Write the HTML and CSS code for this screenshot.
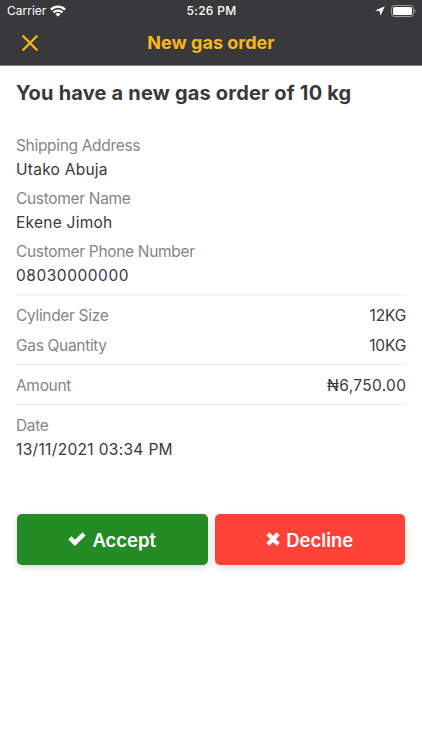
FILE: index.html
```html
<!DOCTYPE html>
<html lang="en">
<head>
<meta charset="utf-8">
<meta name="viewport" content="width=device-width">
<title>New gas order</title>
<link rel="stylesheet" href="styles.css">
</head>
<body>
<header class="top">
  <div class="status">
    <div class="carrier"><span>Carrier</span>
      <svg width="16" height="12" viewBox="0 0 16 12" fill="none" stroke="#fff" stroke-width="2.3"><path d="M.9 4.600C5 .6 11 .6 15.100 4.600"/><path d="M3.500 7.400c2.500-2.400 6.500-2.400 9 0"/><path d="M8 11.800 5.300 9.100c1.600-1.400 3.800-1.400 5.400 0z" fill="#fff" stroke="none"/></svg>
    </div>
    <div class="clock">5:26 PM</div>
    <div class="indicators">
      <svg width="10" height="10" viewBox="0 0 10 10" fill="#fff"><path d="M9.800.2 5.500 9.800 4.800 5.300.2 4.600z"/></svg>
      <svg width="25" height="12" viewBox="0 0 25 12"><rect x=".5" y=".5" width="22" height="11" rx="3" fill="none" stroke="#9a9a9b"/><rect x="2" y="2" width="19" height="8" rx="1.500" fill="#fff"/><path d="M23.500 4v4c1.500-.6 1.500-3.400 0-4z" fill="#9a9a9b"/></svg>
    </div>
  </div>
  <div class="navbar">
    <svg class="close" width="16" height="16" viewBox="0 0 16 16" fill="none" stroke="#fbb81b" stroke-width="2.300" stroke-linecap="round"><path d="M1.300 1.300l13.400 13.400M14.700 1.300 1.300 14.700"/></svg>
    <h1 class="title">New gas order</h1>
  </div>
</header>
<main class="content">
  <h2 class="heading">You have a new gas order of 10 kg</h2>
  <dl class="group">
    <div class="field"><dt>Shipping Address</dt><dd>Utako Abuja</dd></div>
    <div class="field"><dt>Customer Name</dt><dd>Ekene Jimoh</dd></div>
    <div class="field"><dt>Customer Phone Number</dt><dd class="phone">08030000000</dd></div>
  </dl>
  <dl class="group ruled">
    <div class="row"><dt>Cylinder Size</dt><dd class="weight">12KG</dd></div>
    <div class="row"><dt>Gas Quantity</dt><dd class="weight">10KG</dd></div>
  </dl>
  <dl class="group ruled thin">
    <div class="row"><dt>Amount</dt><dd class="price">₦6,750.00</dd></div>
  </dl>
  <dl class="group ruled thin">
    <div class="field"><dt>Date</dt><dd class="when">13/11/2021 03:34 PM</dd></div>
  </dl>
  <div class="actions">
    <button class="btn accept"><svg width="18" height="14" viewBox="0 0 18 14" fill="none" stroke="#fff" stroke-width="4.400"><path d="M1.900 5.900l5 5L16.100 1.900"/></svg><span>Accept</span></button>
    <button class="btn decline"><svg width="14" height="14" viewBox="0 0 14 14" fill="none" stroke="#fff" stroke-width="4.200"><path d="M1.800 1.800l10.400 10.400M12.200 1.800 1.800 12.200"/></svg><span>Decline</span></button>
  </div>
</main>
</body>
</html>
```
FILE: styles.css
```css
* { box-sizing: border-box; }
body { margin: 0; min-height: 750px; background: #fff; color: #39393b; font: 15.5px/24px Inter, "Noto Sans", sans-serif; }
.top { height: 66px; background: #39393b; border-bottom: 1px solid #858586; }
.status { display: grid; grid-template-columns: 1fr auto 1fr; align-items: center; height: 22px; padding: 0 6px 0 7px; color: #fff; font: 12px/22px Inter, sans-serif; }
.carrier { display: flex; align-items: center; gap: 4px; }
.clock { font-weight: 500; letter-spacing: .3px; }
.indicators { display: flex; align-items: center; justify-content: flex-end; gap: 6px; }
.navbar { display: grid; grid-template-columns: 48px 1fr 48px; align-items: center; height: 42px; }
.close { margin-left: 22px; }
.title { margin: 0; color: #fbb81b; text-align: center; font-size: 18px; font-weight: 700; }
.content { padding: 15px 16px 0; }
.heading { margin: 0 0 29px; font-size: 20px; line-height: 24px; font-weight: 700; letter-spacing: .19px; white-space: nowrap; }
.group { display: flex; flex-direction: column; gap: 5px; margin: 0; padding-bottom: 6px; }
.group dt { color: #858586; letter-spacing: -.32px; }
.group dd { margin: 0; letter-spacing: .25px; }
.group .phone { letter-spacing: .53px; }
.group .weight { letter-spacing: -.1px; }
.group .price, .group .when { letter-spacing: .33px; }
.group .price, .group .weight { margin-right: -.3px; }
.ruled { border-top: 2px solid #f5f5f5; padding-top: 8px; }
.ruled:not(.thin) { gap: 6px; }
.thin { border-top: 1px solid #ebebeb; padding-top: 9px; }
.row { display: flex; justify-content: space-between; }
.actions { display: grid; grid-template-columns: 1fr 1fr; gap: 7px; margin: 46px 1px 0; }
.btn { display: flex; align-items: center; justify-content: center; gap: 6px; height: 51px; padding: 1px 0 0; border: 0; border-radius: 5px; color: #fff; font: 600 18.5px/24px Inter, sans-serif; box-shadow: 0 2px 6px rgba(0,0,0,.16); }
.btn svg { margin-bottom: 2px; }
.accept { background: #248c24; }
.decline { background: #ff4237; }
```
